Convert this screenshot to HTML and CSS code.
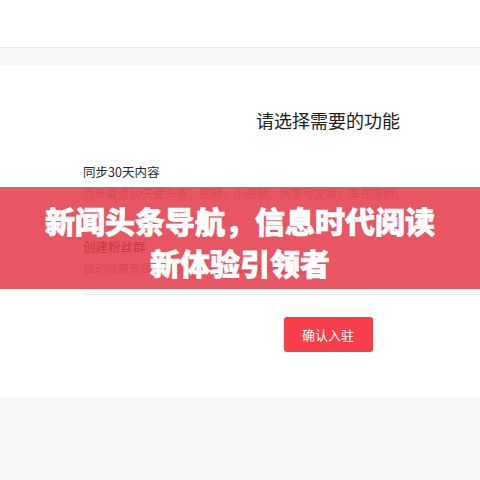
FILE: index.html
```html
<!DOCTYPE html>
<html lang="zh-CN">
<head>
    <meta charset="UTF-8">
    <meta name="viewport" content="width=device-width, initial-scale=1.0">
    <title>新闻头条导航</title>
    <link rel="stylesheet" href="styles.css">
</head>
<body>
    <header class="topbar"></header>
    <div class="gap"></div>

    <!-- 功能选择 -->
    <div class="panel">
        <div class="column">
            <h2 class="panel-title">请选择需要的功能</h2>
            <div class="item">
                <div class="item-title">同步30天内容</div>
                <div class="item-desc">同步最近30天微头条、视频、小视频、头条号文章，率先吸粉。</div>
            </div>
            <div class="item">
                <div class="item-title">创建粉丝群</div>
                <div class="item-desc">自动创建专属粉丝群，与粉丝实时互动交流。</div>
            </div>
            <div class="actions">
                <button class="btn-confirm">确认入驻</button>
            </div>
        </div>
    </div>

    <div class="banner">
        <p>新闻头条导航，信息时代阅读<br>新体验引领者</p>
    </div>
</body>
</html>
```

FILE: styles.css
```css
body {
    font-family: "Noto Sans CJK SC", "Noto Sans", sans-serif;
    margin: 0;
    padding: 0;
    background-color: #f7f7f7;
    color: #333;
    overflow: hidden;
    position: relative;
    height: 480px;
}
.topbar {
    height: 47px;
    background-color: #fff;
    border-bottom: 1px solid #ebebeb;
}
.gap {
    height: 17px;
    background-color: #f7f7f7;
}
.panel {
    background-color: #fff;
    padding: 42px 0 45px 83px;
    overflow: hidden;
}
.column {
    width: 490px;
}
.panel-title {
    margin: 0 0 12px;
    font-size: 18px;
    font-weight: normal;
    line-height: 26px;
    color: #222;
    text-align: center;
}
.item {
    padding: 18px 0 17px;
    border-bottom: 1px solid #eceef3;
}
.item-title {
    font-size: 12.5px;
    line-height: 18px;
    color: #2b2b2b;
}
.item-desc {
    margin-top: 3px;
    font-size: 11.5px;
    line-height: 18px;
    color: #a0a0a0;
}
.actions {
    margin-top: 22px;
    text-align: center;
}
.btn-confirm {
    width: 89px;
    height: 35px;
    border: none;
    border-radius: 3px;
    background-color: #f73f4b;
    color: #fff;
    font-family: inherit;
    font-size: 13px;
    cursor: pointer;
}
.banner {
    position: absolute;
    left: 0;
    right: 0;
    top: 187px;
    padding: 12px 0 6px;
    background-color: rgba(228, 56, 72, 0.85);
    text-align: center;
}
.banner p {
    margin: 0;
    color: #fff;
    font-size: 30px;
    font-weight: 900;
    line-height: 42px;
    -webkit-text-stroke: 0.7px #fff;
}
```
